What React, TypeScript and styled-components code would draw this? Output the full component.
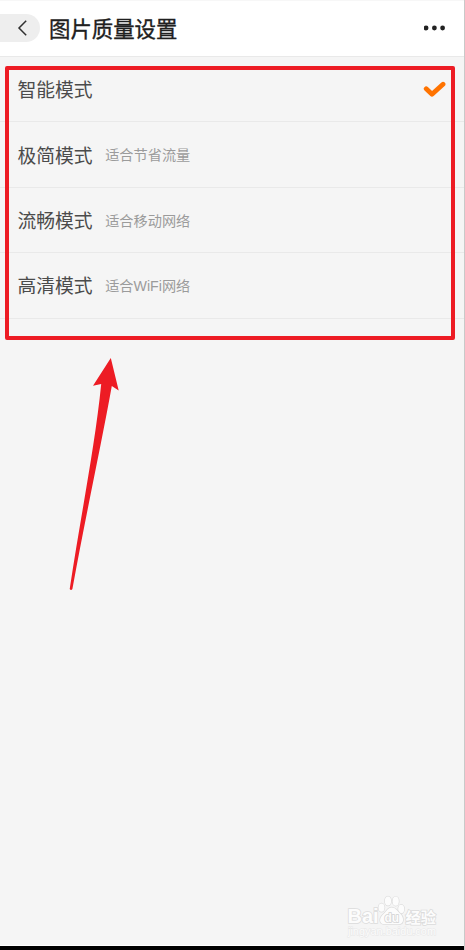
import React from "react";
import styled, { createGlobalStyle } from "styled-components";

const GlobalStyle = createGlobalStyle`
  * { box-sizing: border-box; }
  body { margin: 0; background: #f5f5f5; }
`;

const Screen = styled.main`
  position: relative;
  display: flex;
  flex-direction: column;
  width: 465px;
  height: 950px;
  overflow: hidden;
  background: #f5f5f5;
  border-right: 1px solid #c9c9c9;
  font-family: "Noto Sans CJK SC", sans-serif;
`;

const Header = styled.header`
  display: flex;
  align-items: center;
  flex: none;
  height: 57px;
  padding: 0 18px 2px 0;
  background: #fff;
  border-top: 1px solid #f7f7f7;
  border-bottom: 1px solid #e9e9e9;
`;

const BackButton = styled.button`
  display: flex;
  align-items: center;
  width: 40px;
  height: 28px;
  padding: 0 0 0 16px;
  border: 0;
  border-radius: 0 14px 14px 0;
  background: #eee;
`;

const Title = styled.h1`
  flex: 1;
  margin: 0 0 0 9px;
  color: #202020;
  font-size: 21.4px;
  font-weight: 400;
  -webkit-text-stroke: 0.35px #202020;
  line-height: 30px;
`;

const MoreButton = styled.button`
  display: flex;
  padding: 0;
  border: 0;
  background: none;
`;

const OptionList = styled.ul`
  flex: 1;
  margin: 0;
  padding: 0;
  list-style: none;
`;

const Option = styled.li`
  display: flex;
  align-items: center;
  height: 65.4px;
  padding: 0 18px 0 17.5px;
  border-bottom: 1px solid #e9e9e9;
`;

const OptionName = styled.span`
  color: #4b4b4b;
  font-size: 18.8px;
  line-height: 28px;
`;

const OptionHint = styled.span`
  margin-left: 12.5px;
  padding-bottom: 0.6px;
  color: #9b9b9b;
  font-size: 14.2px;
  line-height: 22px;
`;

const Latin = styled.span`
  font-family: "Liberation Sans", sans-serif;
  line-height: 1;
`;

const Check = styled.svg`
  margin-left: auto;
`;

const BottomBar = styled.footer`
  flex: none;
  height: 5px;
  margin-right: -1px;
  background: #000;
  border-top: 1px solid #fff;
`;

const Highlight = styled.div`
  position: absolute;
  left: 5px;
  top: 66px;
  width: 450px;
  height: 274px;
  border: 4px solid #ed1c24;
  border-radius: 2px;
`;

const Arrow = styled.svg`
  position: absolute;
  left: 65px;
  top: 355px;
`;

const Watermark = styled.svg`
  position: absolute;
  left: 342px;
  top: 892px;
  font-family: "Liberation Sans", "Noto Sans CJK SC", sans-serif;
  font-weight: 700;
  fill: #fcfcfc;
  stroke: #dcdcdc;
  stroke-width: 1.6px;
  paint-order: stroke;
`;

const options = [
  { name: "智能模式", hint: null, selected: true },
  { name: "极简模式", hint: "适合节省流量", selected: false },
  { name: "流畅模式", hint: "适合移动网络", selected: false },
  { name: "高清模式", hint: <>适合<Latin>WiFi</Latin>网络</>, selected: false },
];

export default function App() {
  return (
    <>
      <GlobalStyle />
      <Screen>
        <Header>
          <BackButton aria-label="返回">
            <svg width="12" height="18" viewBox="0 0 12 18" fill="none">
              <path d="M10.2 1.8 3 9l7.2 7.2" stroke="#303030" strokeWidth="1.5" />
            </svg>
          </BackButton>
          <Title>图片质量设置</Title>
          <MoreButton aria-label="更多">
            <svg width="22" height="6" viewBox="0 0 22 6" fill="#222">
              <circle cx="2.1" cy="3" r="2.4" />
              <circle cx="10.4" cy="3" r="2.4" />
              <circle cx="18.6" cy="3" r="2.4" />
            </svg>
          </MoreButton>
        </Header>
        <OptionList>
          {options.map((option) => (
            <Option key={option.name}>
              <OptionName>{option.name}</OptionName>
              {option.hint && <OptionHint>{option.hint}</OptionHint>}
              {option.selected && (
                <Check width="23" height="18" viewBox="0 0 23 18" fill="none">
                  <path d="M3.2 8.8 9 14.3 20 4.2" stroke="#ff7300" strokeWidth="4.8" strokeLinecap="round" strokeLinejoin="round" />
                </Check>
              )}
            </Option>
          ))}
        </OptionList>
        <BottomBar />
        <Highlight />
        <Arrow width="60" height="240" viewBox="0 0 60 240" fill="#ed1c24">
          <path d="M45.8 3 53.7 35.5 46.8 31 C36 91 21 159 7.4 234 Q6 235.8 4.7 234 C16 159 30 91 36.2 29 L28 30.8Z" />
        </Arrow>
        <Watermark width="104" height="50" viewBox="0 0 104 50">
          <text x="5.5" y="31" fontSize="19.5" textLength="31" lengthAdjust="spacingAndGlyphs">Bai</text>
          <ellipse cx="39.5" cy="15.6" rx="3" ry="4.2" strokeWidth="1.4" />
          <ellipse cx="46" cy="9" rx="3.1" ry="4.6" strokeWidth="1.4" />
          <ellipse cx="53.7" cy="9.2" rx="3.1" ry="4.6" strokeWidth="1.4" />
          <ellipse cx="59.2" cy="17" rx="3" ry="4.3" strokeWidth="1.4" />
          <path d="M49.4 15.5c-3.5 0-4.8 4-7.6 6.2-5.2 4.2-5 10.6 1 10.6h13.5c6 0 6-7 2-10.6-3-2.5-4.5-6.2-8.9-6.2z" strokeWidth="1.4" />
          <text x="42.5" y="29.8" fontSize="13" textLength="14.5" lengthAdjust="spacingAndGlyphs" stroke="#d2d2d2">du</text>
          <text x="63.5" y="31" fontSize="15.2" textLength="30.4" strokeWidth="1.6">经验</text>
          <text x="6" y="43" fontSize="10.5" fontWeight="400" textLength="88" lengthAdjust="spacingAndGlyphs" strokeWidth="1" stroke="#e7e7e7">jingyan.baidu.com</text>
        </Watermark>
      </Screen>
    </>
  );
}
